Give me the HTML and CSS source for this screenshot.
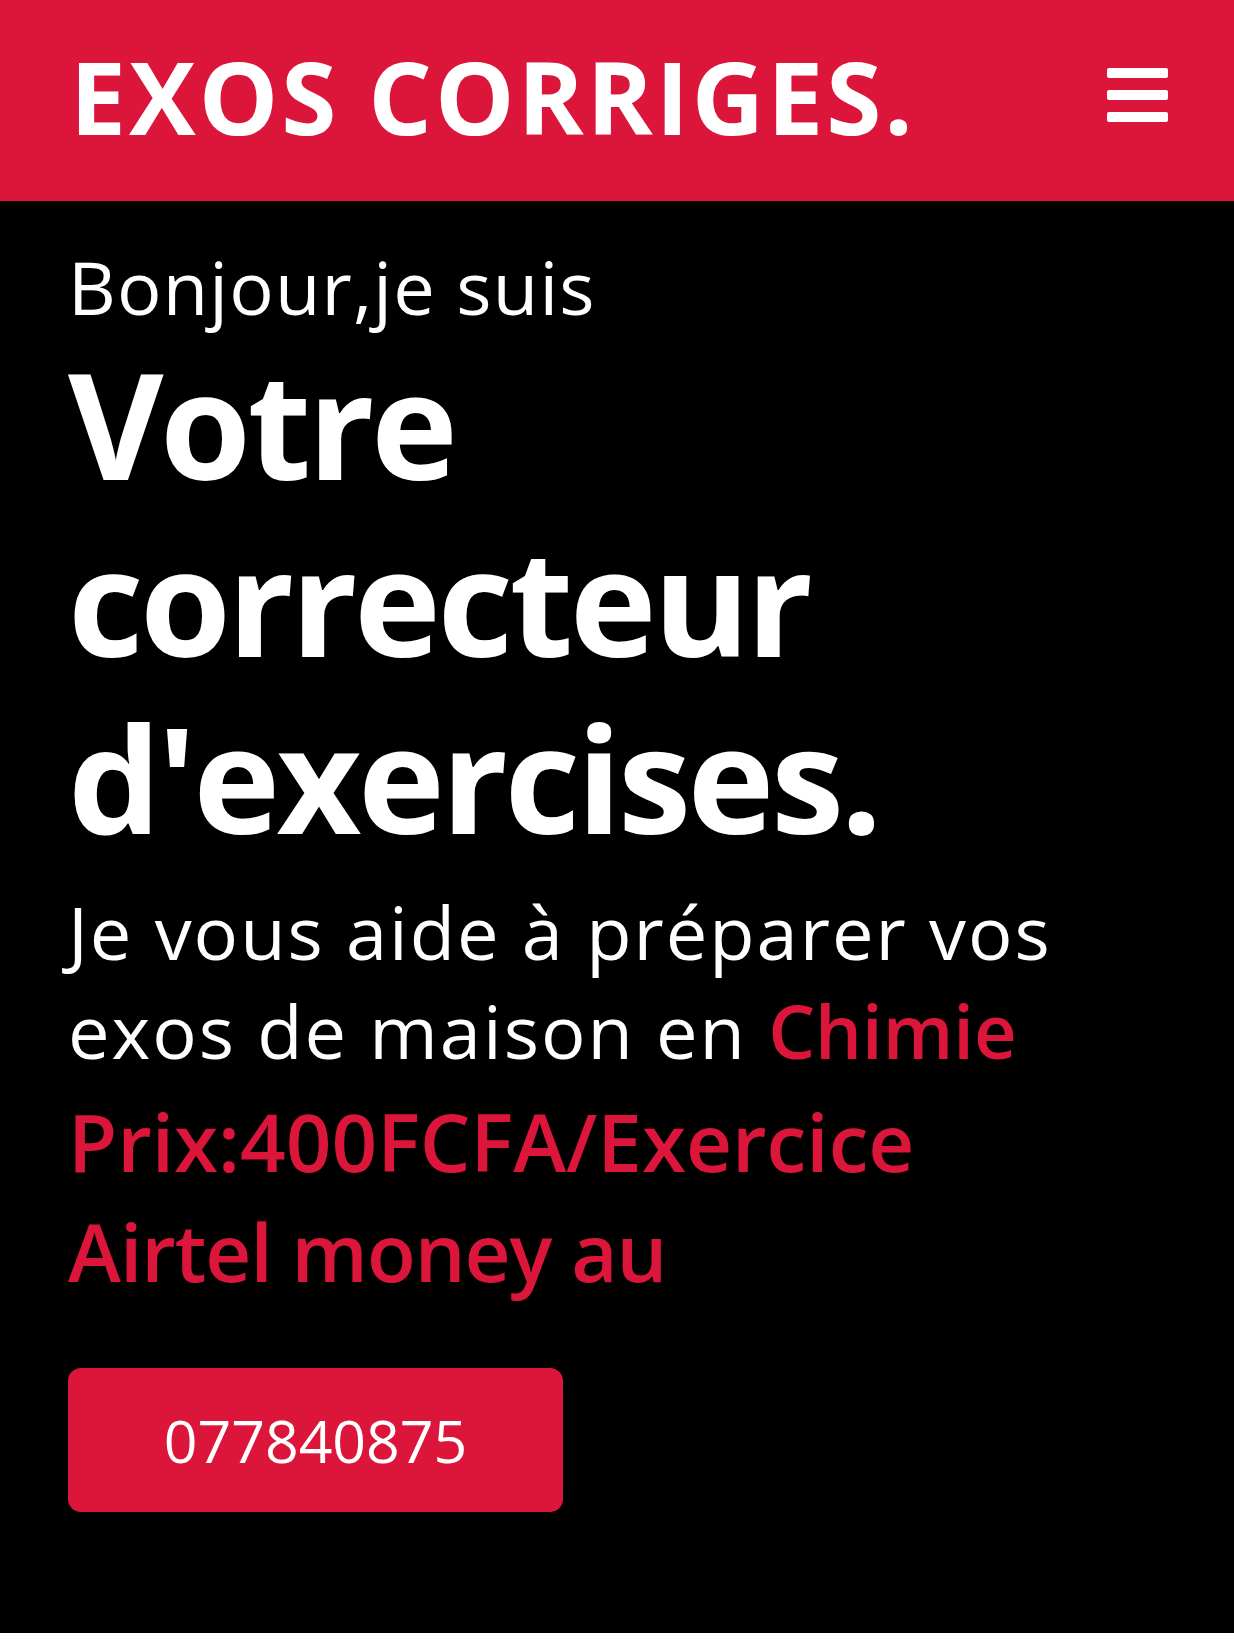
FILE: index.html
```html
<!DOCTYPE html>
<html lang="fr">
<head>
<meta charset="utf-8">
<title>Exos Corriges</title>
<link rel="stylesheet" href="styles.css">
</head>
<body>
<header class="topbar">
  <div class="brand">EXOS CORRIGES.</div>
  <button class="burger" aria-label="Menu">
    <span class="bar"></span>
    <span class="bar"></span>
    <span class="bar"></span>
  </button>
</header>
<main class="hero">
  <p class="hello">Bonjour,je suis</p>
  <h1 class="title">Votre correcteur d'exercises.</h1>
  <p class="intro">Je vous aide à préparer vos exos de maison en <span class="accent">Chimie</span></p>
  <p class="price">Prix:400FCFA/Exercice</p>
  <p class="price second">Airtel money au</p>
  <a class="cta" href="#">077840875</a>
</main>
</body>
</html>
```
FILE: styles.css
```css
* { box-sizing: border-box; }
html, body { margin: 0; padding: 0; }
body {
  background: #ffffff;
  font-family: "Open Sans", "Noto Sans", sans-serif;
  color: #ffffff;
}
.topbar {
  height: 201px;
  background: #dc163b;
  display: flex;
  align-items: center;
  justify-content: space-between;
  padding: 0 66px 0 70px;
}
.brand {
  font-size: 100px;
  font-weight: 700;
  line-height: 1;
  letter-spacing: 3px;
  margin-top: -10px;
}
.burger {
  width: 61px;
  height: 54px;
  padding: 0;
  border: 0;
  background: transparent;
  display: flex;
  flex-direction: column;
  justify-content: space-between;
  margin-top: -12px;
}
.bar {
  display: block;
  height: 10px;
  width: 100%;
  background: #ffffff;
  border-radius: 2px;
}
.hero {
  background: #000000;
  min-height: 1432px;
  padding: 42px 68px 0 68px;
}
.hello {
  margin: 0;
  font-size: 74px;
  line-height: 88px;
  font-weight: 400;
  letter-spacing: 1.2px;
}
.title {
  margin: 4px 0 0;
  font-size: 147px;
  line-height: 177px;
  font-weight: 700;
  letter-spacing: -3.5px;
}
.intro {
  margin: 16px 0 0;
  font-size: 74px;
  line-height: 99px;
  font-weight: 400;
  letter-spacing: 2px;
}
.accent {
  color: #dc163b;
  font-weight: 600;
  letter-spacing: 0;
}
.price {
  margin: 6px 0 0;
  font-size: 80px;
  line-height: 110px;
  font-weight: 600;
  color: #dc163b;
}
.price.second {
  margin-top: 0;
  letter-spacing: -1px;
}
.cta {
  display: flex;
  align-items: center;
  justify-content: center;
  width: 495px;
  height: 144px;
  margin-top: 62px;
  background: #dc163b;
  border-radius: 13px;
  color: #ffffff;
  text-decoration: none;
  font-size: 59px;
  font-weight: 400;
}
```
